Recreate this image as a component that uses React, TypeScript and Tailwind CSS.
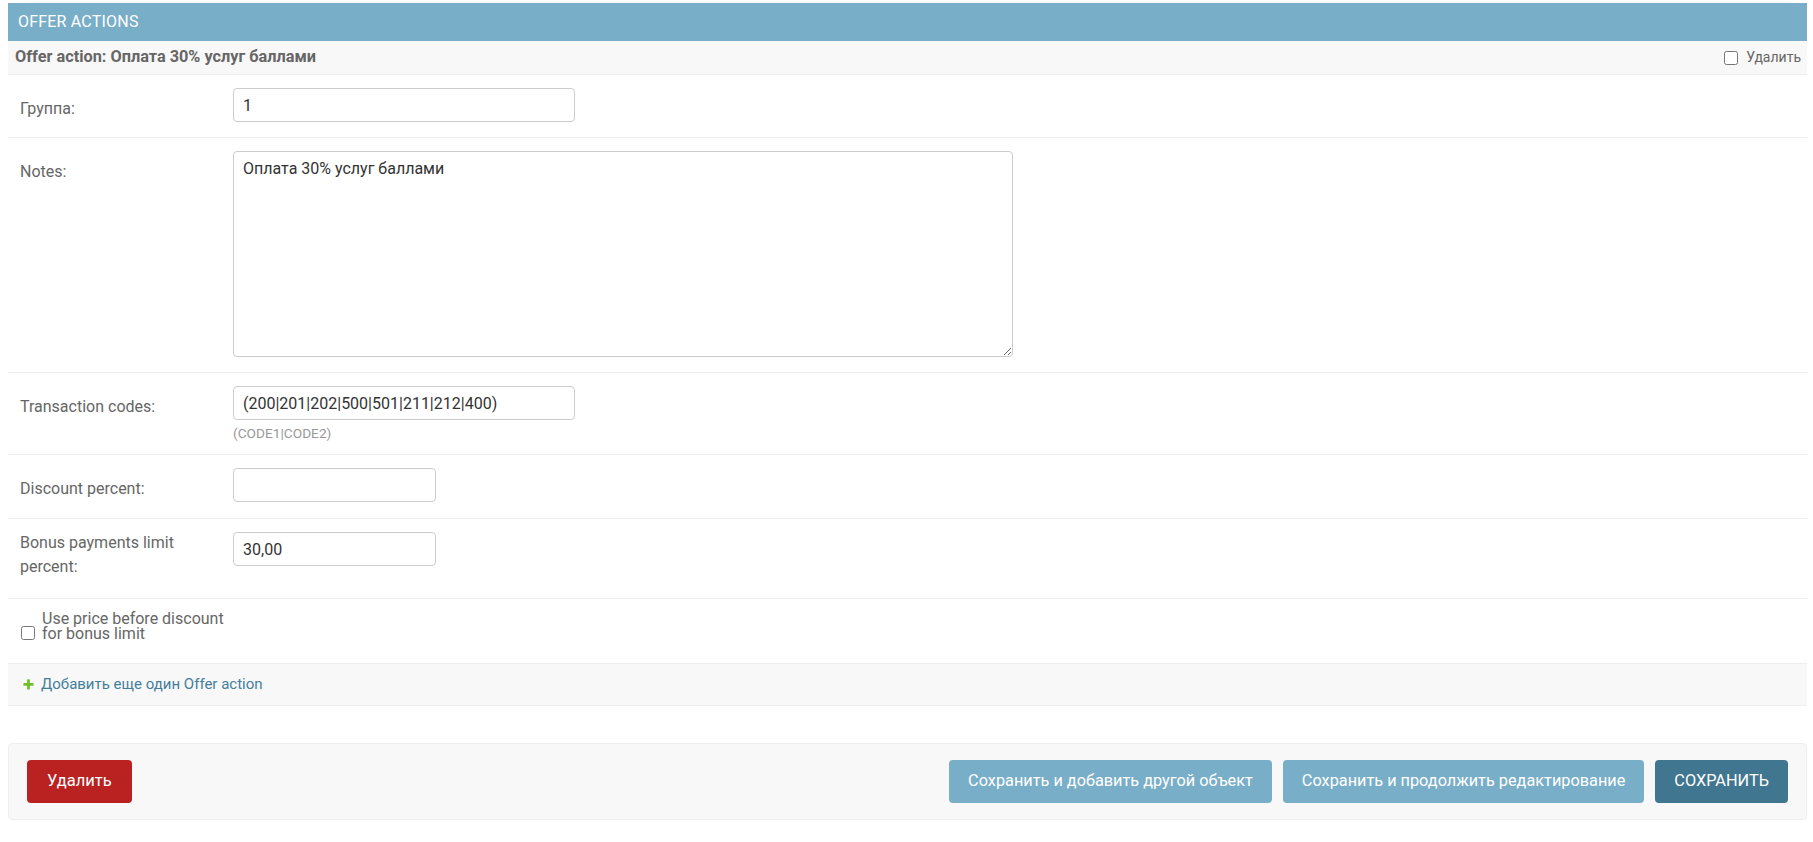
import React from 'react';

const LABEL = 'w-[213px] shrink-0 pr-[11px] text-[16px] leading-[24px] text-[#666]';
const INPUT = 'my-[2px] h-[34px] rounded-[4px] border border-[#ccc] bg-white px-[9px] text-[16px] text-[#333] outline-none';

function AddIcon() {
  return (
    <svg width="13" height="13" viewBox="0 0 1792 1792" className="shrink-0">
      <path
        fill="#70bf2b"
        d="M1600 796v192q0 40-28 68t-68 28h-416v416q0 40-28 68t-68 28h-192q-40 0-68-28t-28-68v-416h-416q-40 0-68-28t-28-68v-192q0-40 28-68t68-28h416v-416q0-40 28-68t68-28h192q40 0 68 28t28 68v416h416q40 0 68 28t28 68z"
      />
    </svg>
  );
}

function Row({ children, className = '' }: { children: React.ReactNode; className?: string }) {
  return <div className={`flex border-b border-[#eee] pl-[12px] pt-[11px] ${className}`}>{children}</div>;
}

export default function App() {
  return (
    <div className="min-h-screen bg-white pt-[3px] pl-[8px] pr-[6px] font-[Roboto,'Liberation_Sans',sans-serif]">
      {/* Inline group */}
      <div>
        <h2 className="flex h-[38px] items-center bg-[#79aec8] pl-[10px] text-[16px] font-normal uppercase tracking-[0.2px] text-white">
          Offer actions
        </h2>

        <h3 className="flex h-[34px] items-center justify-between border-b border-[#eee] bg-[#f8f8f8] pl-[7px] pr-[6px] text-[16.3px] font-bold text-[#666]">
          <span>Offer action: Оплата 30% услуг баллами</span>
          <label className="flex items-center gap-[8px] text-[14px] font-normal text-[#666]">
            <input type="checkbox" className="m-0 h-[14px] w-[14px]" />
            Удалить
          </label>
        </h3>

        <Row className="pb-[13px]">
          <label className={`${LABEL} pt-[11px]`}>Группа:</label>
          <input readOnly defaultValue="1" className={`${INPUT} w-[342px]`} />
        </Row>

        <Row className="pb-[13px]">
          <label className={`${LABEL} pt-[11px]`}>Notes:</label>
          <textarea
            readOnly
            defaultValue="Оплата 30% услуг баллами"
            className="my-[2px] h-[206px] w-[780px] rounded-[4px] border border-[#ccc] bg-white px-[9px] py-[7px] text-[16px] leading-[20px] text-[#333] outline-none"
          />
        </Row>

        <Row className="pb-[13px]">
          <label className={`${LABEL} pt-[11px]`}>Transaction codes:</label>
          <div className="flex flex-col">
            <input readOnly defaultValue="(200|201|202|500|501|211|212|400)" className={`${INPUT} w-[342px]`} />
            <div className="pt-[3px] text-[13.7px] leading-[16px] text-[#999]">(CODE1|CODE2)</div>
          </div>
        </Row>

        <Row className="pb-[14px]">
          <label className={`${LABEL} pt-[11px]`}>Discount percent:</label>
          <input readOnly defaultValue="" className={`${INPUT} w-[203px]`} />
        </Row>

        <Row className="pb-[19px]">
          <label className={`${LABEL} pt-[1px]`}>Bonus payments limit percent:</label>
          <input readOnly defaultValue="30,00" className={`${INPUT} w-[203px]`} />
        </Row>

        <div className="flex items-end border-b border-[#eee] pl-[13px] pt-[12px] pb-[17px]">
          <input type="checkbox" className="m-0 mb-[6px] h-[14px] w-[14px] shrink-0" />
          <label className="w-[205px] pl-[7px] pb-[5px] text-[16px] leading-[15px] text-[#666]">
            Use price before discount for bonus limit
          </label>
        </div>

        <div className="flex h-[42px] items-center gap-[6px] border-b border-[#eee] bg-[#f8f8f8] pl-[14px] text-[15px] text-[#447e9b]">
          <AddIcon />
          <span>Добавить еще один Offer action</span>
        </div>
      </div>

      {/* Submit row */}
      <div className="mt-[37px] flex items-center rounded-[4px] border border-[#eee] bg-[#f8f8f8] px-[18px] py-[16px]">
        <button className="h-[43px] rounded-[4px] bg-[#ba2121] px-[20px] text-[16.5px] text-white">Удалить</button>
        <div className="ml-auto flex gap-[11px]">
          <button className="h-[43px] rounded-[4px] bg-[#79aec8] px-[19px] text-[16.3px] text-white">
            Сохранить и добавить другой объект
          </button>
          <button className="h-[43px] rounded-[4px] bg-[#79aec8] px-[19px] text-[16.3px] text-white">
            Сохранить и продолжить редактирование
          </button>
          <button className="h-[43px] rounded-[4px] bg-[#417690] px-[19px] text-[16.3px] uppercase text-white">
            Сохранить
          </button>
        </div>
      </div>
    </div>
  );
}
